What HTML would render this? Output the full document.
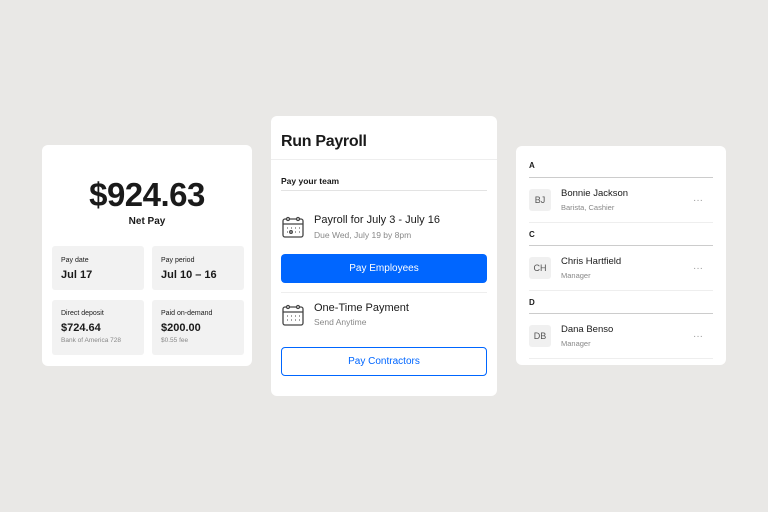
<!DOCTYPE html><html><head><style>
*{margin:0;padding:0;box-sizing:border-box}
body{width:768px;height:512px;background:#e9e8e6;font-family:"Liberation Sans",sans-serif;position:relative;overflow:hidden;color:#1a1a1a}
.a{position:absolute}
.card{position:absolute;background:#fff;border-radius:6px}
.t{position:absolute;white-space:nowrap}
.tile{position:absolute;background:#f2f2f2;border-radius:3px}
.line{position:absolute;height:1px;background:#ddd}
.av{position:absolute;width:22px;height:22px;background:#f0f0f0;border-radius:3px;font-size:9px;color:#555;text-align:center;line-height:22px}
.dots{position:absolute;font-size:10px;color:#999;letter-spacing:0px}
</style></head><body>
<div class="card" style="left:42px;top:145px;width:210px;height:221px">
 <div class="t" style="left:0;width:210px;text-align:center;top:31px;font-size:33px;font-weight:bold;letter-spacing:-0.5px">$924.63</div>
 <div class="t" style="left:0;width:210px;text-align:center;top:71px;font-size:10px;font-weight:bold">Net Pay</div>
 <div class="tile" style="left:10px;top:101px;width:92px;height:44px"><div class="t" style="left:9px;top:11px;font-size:7px">Pay date</div><div class="t" style="left:9px;top:23px;font-size:11px;font-weight:bold">Jul 17</div></div>
 <div class="tile" style="left:110px;top:101px;width:92px;height:44px"><div class="t" style="left:9px;top:11px;font-size:7px">Pay period</div><div class="t" style="left:9px;top:23px;font-size:11px;font-weight:bold">Jul 10 – 16</div></div>
 <div class="tile" style="left:10px;top:155px;width:92px;height:55px"><div class="t" style="left:9px;top:10px;font-size:7px">Direct deposit</div><div class="t" style="left:9px;top:22px;font-size:11px;font-weight:bold">$724.64</div><div class="t" style="left:9px;top:37px;font-size:6.5px;color:#888">Bank of America 728</div></div>
 <div class="tile" style="left:110px;top:155px;width:92px;height:55px"><div class="t" style="left:9px;top:10px;font-size:7px">Paid on-demand</div><div class="t" style="left:9px;top:22px;font-size:11px;font-weight:bold">$200.00</div><div class="t" style="left:9px;top:37px;font-size:6.5px;color:#888">$0.55 fee</div></div>
</div>
<div class="card" style="left:271px;top:116px;width:226px;height:280px">
 <div class="t" style="left:10px;top:17px;font-size:16px;font-weight:bold;letter-spacing:-0.3px">Run Payroll</div>
 <div class="line" style="left:0;width:226px;top:43px;background:#eee"></div>
 <div class="t" style="left:10px;top:60px;font-size:8.5px;font-weight:bold">Pay your team</div>
 <div class="line" style="left:10px;width:206px;top:74px;background:#e3e3e3"></div>
 <svg class="a" style="left:10px;top:99px" width="24" height="24" viewBox="0 0 24 24" fill="none" stroke="#444" stroke-width="1.3"><rect x="2" y="4" width="20" height="18" rx="2"/><path d="M2 9h20"/><circle cx="7" cy="4" r="1.5" fill="#fff"/><circle cx="17" cy="4" r="1.5" fill="#fff"/><path d="M6 13h.8M10 13h.8M14 13h.8M18 13h.8M6 17h.8M14 17h.8M18 17h.8" stroke-width="1.2"/><circle cx="10" cy="17" r="1.3"/></svg>
 <div class="t" style="left:43px;top:98px;font-size:11px">Payroll for July 3 - July 16</div>
 <div class="t" style="left:43px;top:114px;font-size:8.5px;color:#888">Due Wed, July 19 by 8pm</div>
 <div class="a" style="left:10px;top:138px;width:206px;height:29px;background:#0066ff;border-radius:4px;color:#fff;font-size:10px;text-align:center;line-height:29px">Pay Employees</div>
 <div class="line" style="left:10px;width:206px;top:176px;background:#eee"></div>
 <svg class="a" style="left:10px;top:187px" width="24" height="24" viewBox="0 0 24 24" fill="none" stroke="#444" stroke-width="1.3"><rect x="2" y="4" width="20" height="18" rx="2"/><path d="M2 9h20"/><circle cx="7" cy="4" r="1.5" fill="#fff"/><circle cx="17" cy="4" r="1.5" fill="#fff"/><path d="M6 13h.8M10 13h.8M14 13h.8M18 13h.8M6 17h.8M10 17h.8M14 17h.8M18 17h.8" stroke-width="1.2"/></svg>
 <div class="t" style="left:43px;top:186px;font-size:11px">One-Time Payment</div>
 <div class="t" style="left:43px;top:201px;font-size:8.5px;color:#888">Send Anytime</div>
 <div class="a" style="left:10px;top:231px;width:206px;height:29px;border:1px solid #0066ff;border-radius:4px;color:#0066ff;font-size:10px;text-align:center;line-height:27px">Pay Contractors</div>
</div>
<div class="card" style="left:516px;top:146px;width:210px;height:219px">
 <div class="t" style="left:13px;top:15px;font-size:8px;font-weight:bold">A</div>
 <div class="line" style="left:13px;width:184px;top:31px;background:#ccc"></div>
 <div class="av" style="left:13px;top:43px">BJ</div>
 <div class="t" style="left:45px;top:42px;font-size:9.5px">Bonnie Jackson</div>
 <div class="t" style="left:45px;top:57px;font-size:7.5px;color:#888">Barista, Cashier</div>
 <div class="dots" style="left:177px;top:49px">···</div>
 <div class="line" style="left:13px;width:184px;top:76px;background:#eee"></div>
 <div class="t" style="left:13px;top:84px;font-size:8px;font-weight:bold">C</div>
 <div class="line" style="left:13px;width:184px;top:99px;background:#ccc"></div>
 <div class="av" style="left:13px;top:111px">CH</div>
 <div class="t" style="left:45px;top:110px;font-size:9.5px">Chris Hartfield</div>
 <div class="t" style="left:45px;top:125px;font-size:7.5px;color:#888">Manager</div>
 <div class="dots" style="left:177px;top:117px">···</div>
 <div class="line" style="left:13px;width:184px;top:144px;background:#eee"></div>
 <div class="t" style="left:13px;top:152px;font-size:8px;font-weight:bold">D</div>
 <div class="line" style="left:13px;width:184px;top:167px;background:#ccc"></div>
 <div class="av" style="left:13px;top:179px">DB</div>
 <div class="t" style="left:45px;top:178px;font-size:9.5px">Dana Benso</div>
 <div class="t" style="left:45px;top:193px;font-size:7.5px;color:#888">Manager</div>
 <div class="dots" style="left:177px;top:185px">···</div>
 <div class="line" style="left:13px;width:184px;top:212px;background:#eee"></div>
</div>
</body></html>
